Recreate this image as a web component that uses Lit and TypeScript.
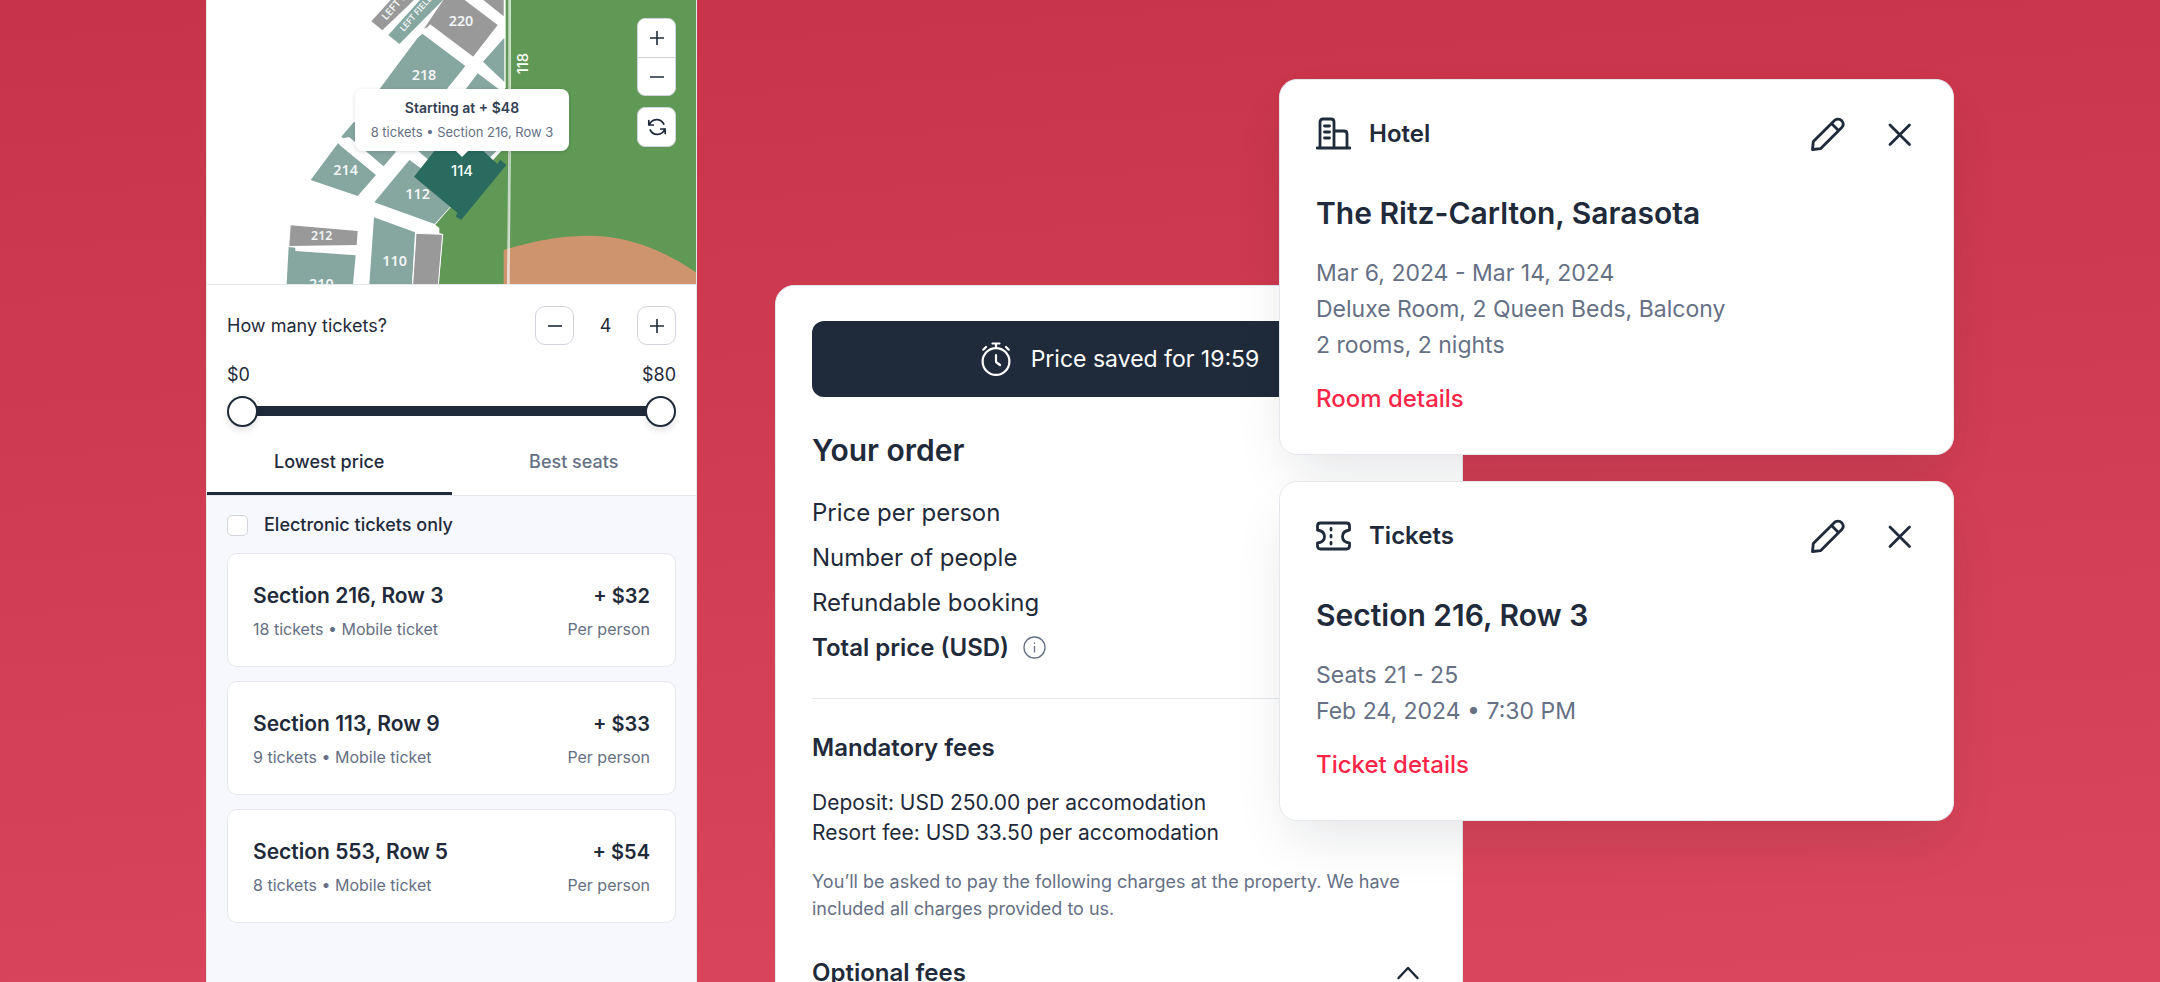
import { LitElement, html, svg, css } from "lit";
import { customElement, property, state } from "lit/decorators.js";
import { classMap } from "lit/directives/class-map.js";

const base = css`
  * {
    box-sizing: border-box;
  }
  :host {
    font-family: Inter, "Open Sans", sans-serif;
    color: #1f2a3a;
  }
  h2,
  h3,
  p,
  ul,
  dl,
  dt {
    margin: 0;
    padding: 0;
  }
  button {
    font: inherit;
    color: inherit;
    background: none;
    border: 0;
    padding: 0;
    cursor: pointer;
  }
  svg {
    display: block;
  }
`;

const plus = svg`<path d="M1 8H15M8 1V15" />`;
const minus = svg`<path d="M1 8H15" />`;

@customElement("stadium-map")
class StadiumMap extends LitElement {
  static styles = [
    base,
    css`
      :host {
        display: block;
        position: relative;
        height: 285px;
        overflow: hidden;
        border-bottom: 1px solid #e4e7ec;
        background: #fff;
      }
      .plan {
        width: 100%;
        height: 100%;
      }
      .teal {
        fill: #86a6a0;
      }
      .gray {
        fill: #999;
      }
      .label {
        font: 600 43px "Noto Sans", sans-serif;
        fill: #f2f5f5;
        text-anchor: middle;
      }
      .label.wide {
        font-size: 37px;
      }
      .label.strip {
        font-size: 31px;
        text-anchor: start;
      }
      .label.strip.small {
        font-size: 26px;
      }
      .label.bright {
        font: 500 44px Inter, sans-serif;
        fill: #fff;
      }
      .tip {
        position: absolute;
        top: 89px;
        left: 148px;
        width: 214px;
        height: 62px;
        padding: 6px 0;
        border-radius: 8px;
        background: #fff;
        box-shadow: 0 1px 4px rgba(16, 24, 40, 0.14);
        text-align: center;
        font-size: 13px;
        line-height: 25px;
        color: #667085;
        white-space: nowrap;
      }
      .tip::after {
        content: "";
        position: absolute;
        top: 100%;
        left: 50%;
        margin-left: -6px;
        border: 6px solid transparent;
        border-top-color: #fff;
        border-bottom: 0;
      }
      .tip strong {
        display: block;
        font-size: 14px;
        font-weight: 600;
        color: #344054;
      }
      .tools {
        position: absolute;
        top: 18px;
        right: 20px;
        display: grid;
        gap: 11px;
      }
      .group {
        width: 39px;
        border: 1px solid #d0d5dd;
        border-radius: 8px;
        background: #fff;
        overflow: hidden;
      }
      .tool {
        display: grid;
        place-items: center;
        width: 100%;
        height: 38px;
      }
      .tool + .tool {
        border-top: 1px solid #d0d5dd;
      }
      .glyph {
        width: 14px;
        height: 14px;
        fill: none;
        stroke: #1f2a3a;
        stroke-width: 1.6;
      }
      .glyph.turn {
        width: 20px;
        height: 20px;
        stroke-width: 1.7;
        stroke-linecap: round;
        stroke-linejoin: round;
      }
    `,
  ];

  render() {
    return html`
      <svg class="plan" viewBox="21 0 1467 852" preserveAspectRatio="xMidYMin slice" aria-label="Seating plan">
        <path fill="#609956" d="M915 0H1491V852H716L729 703L718 700V684L706 674L752 622L915 440Z" />
        <path fill="#cd946d" d="M911 852V750Q1050 707 1165 707Q1330 707 1491 819V852Z" />
        <path stroke="#fff" stroke-opacity=".7" stroke-width="8" d="M929 0V420L925 852" />
        <path stroke="#fff" stroke-width="4" d="M915 0V265" />
        <path class="gray" d="M514 64L572 0H642L547 91Z" />
        <path class="teal" d="M565 105L660 0H729L598 132Z" />
        <path class="gray" d="M730 0H794L893 75L818 172L695 77L672 86Z" />
        <path fill="#fff" d="M667 101L690 73L822 172L838 190L796 197Z" />
        <path class="gray" d="M850 0H911V49Z" />
        <path class="teal" d="M667 101L796 198L740 268H538L652 115Z" />
        <path class="teal" d="M849 185L913 113V246Z" />
        <path class="teal" d="M833 220L897 268H797Z" />
        <path class="teal" d="M462 365L480 380L588 455L551 499L447 411L430 415L424 410Z" />
        <path class="teal" d="M332 540L414 430L425 440L528 525L473 588Z" />
        <path class="teal" d="M640 440H740L683 478Z" />
        <path class="teal" d="M820 440H902L868 475Z" />
        <path class="teal" d="M628 480L662 504L760 610L704 672L523 607Z" />
        <path class="gray" d="M272 676L473 693L470 735L268 738Z" />
        <path class="teal" d="M266 741L286 743V753L467 766L459 852H260Z" />
        <path class="teal" d="M522 652L645 697L636 852H508Z" />
        <path class="gray" stroke="#fff" stroke-width="3" d="M648 700L728 703L715 854H638Z" />
        <path fill="#2a6b60" d="M642 530L725 425H820L892 492L901 479L919 495L784 659L767 650L772 638Z" />
        <text class="label" x="783" y="78">220</text>
        <text class="label" x="672" y="240">218</text>
        <text class="label" x="437" y="526">214</text>
        <text class="label" x="653" y="598">112</text>
        <text class="label" x="584" y="799">110</text>
        <text class="label wide" x="365" y="719">212</text>
        <text class="label" x="364" y="866">210</text>
        <text class="label bright" x="786" y="528">114</text>
        <text class="label bright" transform="translate(983 191) rotate(-90)">118</text>
        <text class="label strip" transform="translate(559 62) rotate(-49)">LEFT R</text>
        <text class="label strip small" transform="translate(611 96) rotate(-49)">LEFT FIELD</text>
      </svg>
      <div class="tools">
        <div class="group">
          <button class="tool" aria-label="Zoom in"><svg class="glyph" viewBox="1 1 14 14">${plus}</svg></button>
          <button class="tool" aria-label="Zoom out"><svg class="glyph" viewBox="1 1 14 14">${minus}</svg></button>
        </div>
        <div class="group">
          <button class="tool" aria-label="Reset map">
            <svg class="glyph turn" viewBox="0 0 20 20">
              <path d="M1.8 3.5V8H6.3M18.2 16.500V12H13.700M2.200 8C5 1 13.500 .8 16.800 7M17.800 12C15 19 6.500 19.200 3.200 13" />
            </svg>
          </button>
        </div>
      </div>
      <div class="tip"><strong>Starting at + $48</strong>8 tickets • Section 216, Row 3</div>
    `;
  }
}

interface Listing {
  seat: string;
  info: string;
  price: string;
}

@customElement("ticket-picker")
class TicketPicker extends LitElement {
  static styles = [
    base,
    css`
      :host {
        display: flex;
        flex-direction: column;
        border: solid #e4e7ec;
        border-width: 0 1px;
        background: #f7f7fe;
        font-size: 18px;
        line-height: 24px;
      }
      .filters {
        padding: 21px 20px 0;
        background: #fff;
      }
      .row {
        display: flex;
        align-items: center;
        justify-content: space-between;
      }
      .stepper {
        display: grid;
        grid-template-columns: 39px 63px 39px;
        align-items: center;
        text-align: center;
      }
      .step {
        display: grid;
        place-items: center;
        height: 39px;
        border: 1px solid #d0d5dd;
        border-radius: 10px;
      }
      .glyph {
        width: 14px;
        height: 14px;
        fill: none;
        stroke: #1f2a3a;
        stroke-width: 1.6;
      }
      .bounds {
        margin-top: 18px;
      }
      .slider {
        display: grid;
        align-items: center;
        height: 32px;
        margin-top: 8px;
        background: linear-gradient(#1f2a3a, #1f2a3a) center / calc(100% - 30px) 10px no-repeat;
      }
      .range {
        grid-area: 1 / 1;
        appearance: none;
        width: 100%;
        height: 31px;
        margin: 0;
        background: none;
        pointer-events: none;
      }
      .range::-webkit-slider-thumb {
        appearance: none;
        width: 31px;
        height: 31px;
        border: 2px solid #1f2a3a;
        border-radius: 50%;
        background: #fff;
        box-shadow: 0 4px 6px rgba(16, 24, 40, 0.1);
        pointer-events: auto;
      }
      .tabs {
        display: grid;
        grid-template-columns: 1fr 1fr;
        margin: 4px -20px 0;
        border-bottom: 1px solid #e4e7ec;
      }
      .tab {
        height: 64px;
        border-bottom: 3px solid transparent;
        font-weight: 500;
        color: #667085;
      }
      .tab.active {
        color: #1f2a3a;
        border-color: #1f2a3a;
      }
      .only {
        display: flex;
        align-items: center;
        gap: 16px;
        margin: 17px 20px 16px;
        font-weight: 500;
      }
      .box {
        appearance: none;
        width: 21px;
        height: 21px;
        margin: 0;
        border: 1px solid #d0d5dd;
        border-radius: 5px;
        background: #fff;
      }
      .box:checked {
        background: #1f2a3a;
      }
      .list {
        display: grid;
        gap: 14px;
        margin: 0 20px;
        list-style: none;
      }
      .offer {
        display: grid;
        grid-template-columns: 1fr auto;
        row-gap: 8px;
        height: 114px;
        padding: 29px 25px 0;
        border: 1px solid #e4e7ec;
        border-radius: 10px;
        background: #fff;
        align-content: start;
      }
      .seat,
      .price {
        font-size: 21px;
        line-height: 26px;
        font-weight: 600;
      }
      .price {
        font-size: 20px;
      }
      .end {
        text-align: right;
      }
      .muted {
        font-size: 16px;
        color: #667085;
      }
    `,
  ];

  @state() count = 4;
  @state() tab = 0;
  @state() low = 0;
  @state() high = 80;

  listings: Listing[] = [
    { seat: "Section 216, Row 3", info: "18 tickets • Mobile ticket", price: "+ $32" },
    { seat: "Section 113, Row 9", info: "9 tickets • Mobile ticket", price: "+ $33" },
    { seat: "Section 553, Row 5", info: "8 tickets • Mobile ticket", price: "+ $54" },
  ];

  render() {
    return html`
      <stadium-map></stadium-map>
      <div class="filters">
        <div class="row">
          <span>How many tickets?</span>
          <div class="stepper">
            <button class="step" aria-label="Fewer tickets" @click=${() => (this.count = Math.max(1, this.count - 1))}>
              <svg class="glyph" viewBox="1 1 14 14">${minus}</svg>
            </button>
            <output>${this.count}</output>
            <button class="step" aria-label="More tickets" @click=${() => this.count++}>
              <svg class="glyph" viewBox="1 1 14 14">${plus}</svg>
            </button>
          </div>
        </div>
        <div class="row bounds"><span>$${this.low}</span><span>$${this.high}</span></div>
        <div class="slider">
          <input class="range" type="range" max="80" aria-label="Lowest price" .value=${String(this.low)}
            @input=${(e: Event) => (this.low = +(e.target as HTMLInputElement).value)} />
          <input class="range" type="range" max="80" aria-label="Highest price" .value=${String(this.high)}
            @input=${(e: Event) => (this.high = +(e.target as HTMLInputElement).value)} />
        </div>
        <div class="tabs" role="tablist">
          ${["Lowest price", "Best seats"].map(
            (name, i) => html`<button role="tab" aria-selected=${i === this.tab}
              class=${classMap({ tab: true, active: i === this.tab })}
              @click=${() => (this.tab = i)}>${name}</button>`
          )}
        </div>
      </div>
      <label class="only"><input class="box" type="checkbox" />Electronic tickets only</label>
      <ul class="list">
        ${this.listings.map(
          (l) => html`<li class="offer">
            <span class="seat">${l.seat}</span><span class="price end">${l.price}</span>
            <span class="muted">${l.info}</span><span class="muted end">Per person</span>
          </li>`
        )}
      </ul>
    `;
  }
}

@customElement("order-summary")
class OrderSummary extends LitElement {
  static styles = [
    base,
    css`
      :host {
        display: block;
        padding: 35px 36px;
        border: 1px solid #e4e7ec;
        border-radius: 19px;
        background: #fff;
        font-size: 24px;
        line-height: 33px;
      }
      .banner {
        display: flex;
        align-items: center;
        justify-content: center;
        gap: 18px;
        height: 76px;
        border-radius: 12px;
        background: #1f2a3a;
        color: #fff;
        font-size: 23px;
      }
      .clock {
        width: 34px;
        height: 36px;
        fill: none;
        stroke: #fff;
        stroke-width: 2.2;
        stroke-linecap: round;
        stroke-linejoin: round;
      }
      .title {
        margin-top: 32px;
        font-size: 30px;
        line-height: 42px;
        font-weight: 600;
      }
      .rows {
        display: grid;
        gap: 12px;
        margin-top: 25px;
      }
      .total {
        display: flex;
        align-items: center;
        gap: 14px;
        font-weight: 600;
      }
      .info {
        width: 23px;
        height: 23px;
        fill: none;
        stroke: #667085;
        stroke-width: 1.3;
      }
      .rule {
        height: 1px;
        margin: 34px 0 32px;
        border: 0;
        background: #e4e7ec;
      }
      .sub {
        font-size: 24px;
        line-height: 33px;
        font-weight: 600;
      }
      .fees {
        margin-top: 24px;
        font-size: 21px;
        line-height: 30px;
      }
      .note {
        margin-top: 20px;
        font-size: 18px;
        line-height: 27px;
        color: #667085;
      }
      .toggle {
        display: flex;
        align-items: center;
        justify-content: space-between;
        width: 100%;
        margin-top: 34px;
        padding-right: 6px;
        font-size: 24px;
        line-height: 33px;
        font-weight: 600;
      }
      .chevron {
        width: 24px;
        height: 14px;
        fill: none;
        stroke: #1f2a3a;
        stroke-width: 2.5;
        stroke-linecap: round;
        stroke-linejoin: round;
      }
    `,
  ];

  render() {
    return html`
      <div class="banner">
        <svg class="clock" viewBox="0 0 34 36" aria-hidden="true">
          <circle cx="17" cy="20.500" r="13.400" />
          <path d="M13.500 2.500H20.500M17 2.500V7M4.200 8.700L7 6M29.800 8.700L27 6M17 14V21L21 24" />
        </svg>
        <span>Price saved for 19:59</span>
      </div>
      <h2 class="title">Your order</h2>
      <dl class="rows">
        <dt>Price per person</dt>
        <dt>Number of people</dt>
        <dt>Refundable booking</dt>
        <dt class="total">
          Total price (USD)
          <svg class="info" viewBox="0 0 23 23" aria-hidden="true">
            <circle cx="11.500" cy="11.500" r="10.500" />
            <path d="M11.500 10V16.500M11.500 6.500V8" />
          </svg>
        </dt>
      </dl>
      <hr class="rule" />
      <h3 class="sub">Mandatory fees</h3>
      <p class="fees">Deposit: USD 250.00 per accomodation<br />Resort fee: USD 33.50 per accomodation</p>
      <p class="note">You’ll be asked to pay the following charges at the property. We have included all charges provided to us.</p>
      <button class="toggle" aria-expanded="true">
        Optional fees
        <svg class="chevron" viewBox="0 0 24 14" aria-hidden="true"><path d="M2.500 12L12 2L21.500 12" /></svg>
      </button>
    `;
  }
}

const hotelIcon = svg`
  <path d="M4 30V5Q4 2 7 2H15Q18 2 18 5V30M18 14H28Q31 14 31 17V30M1 31H34" />
  <path d="M8.500 9H13.500M8.500 15H13.500M8.500 21H13.500" />`;
const ticketIcon = svg`
  <path d="M4.500 4H30.500Q33.500 4 33.500 7V11Q26.500 12 26.500 17.500T33.500 24V27Q33.500 30 30.500 30H4.500Q1.500 30 1.500 27V24Q8.500 23 8.500 17.500T1.500 11V7Q1.500 4 4.500 4Z" />
  <path d="M15 9.500V11M15 16.500V18M15 23.500V25" />`;

@customElement("booking-card")
class BookingCard extends LitElement {
  static styles = [
    base,
    css`
      :host {
        display: block;
        padding: 33px 36px 37px;
        border: 1px solid #e4e7ec;
        border-radius: 18px;
        background: #fff;
        box-shadow: 0 24px 56px -12px rgba(16, 24, 40, 0.12);
        font-size: 23px;
        line-height: 36px;
      }
      .head {
        display: flex;
        align-items: center;
        height: 42px;
        font-size: 24px;
        font-weight: 600;
      }
      .kind {
        margin-right: 18px;
      }
      .name {
        flex: 1;
      }
      .icon {
        width: 35px;
        height: 35px;
        fill: none;
        stroke: #1f2a3a;
        stroke-width: 2.8;
        stroke-linecap: round;
        stroke-linejoin: round;
      }
      .act {
        margin-left: 37px;
      }
      .title {
        margin-top: 37px;
        font-size: 30px;
        line-height: 42px;
        font-weight: 600;
      }
      .lines {
        margin: 21px 0 18px;
        color: #667085;
      }
      .more {
        display: block;
        width: max-content;
        color: #fd2648;
        font-size: 24px;
        font-weight: 500;
        text-decoration: none;
      }
    `,
  ];

  @property() kind = "hotel";
  @property() name = "";
  @property() heading = "";
  @property({ attribute: false }) lines: string[] = [];
  @property() link = "";

  render() {
    return html`
      <div class="head">
        <svg class="icon kind" viewBox="0 0 35 35" aria-hidden="true">
          ${this.kind === "hotel" ? hotelIcon : ticketIcon}
        </svg>
        <span class="name">${this.name}</span>
        <button class="act" aria-label="Edit">
          <svg class="icon" viewBox="0 0 35 35">
            <path d="M2.500 32.500L3.300 24.500L25 2.900Q29 .800 32 4Q34.500 7.200 32 10.200L10.500 31.700ZM21.500 6.500L28.500 13.500" />
          </svg>
        </button>
        <button class="act" aria-label="Remove">
          <svg class="icon" viewBox="0 0 35 35"><path d="M8 8L27.500 27.500M27.500 8L8 27.500" /></svg>
        </button>
      </div>
      <h2 class="title">${this.heading}</h2>
      <div class="lines">${this.lines.map((l) => html`<p>${l}</p>`)}</div>
      <a class="more" href="#">${this.link}</a>
    `;
  }
}

@customElement("app-root")
class AppRoot extends LitElement {
  static styles = [
    base,
    css`
      :host {
        display: grid;
        grid-template-columns:
          minmax(0, 206fr) minmax(0, 491fr) minmax(0, 78fr) minmax(0, 504fr)
          minmax(0, 184fr) minmax(0, 491fr) minmax(0, 206fr);
        grid-template-rows: 100vh;
        height: 100vh;
        overflow: hidden;
        background: linear-gradient(176deg, #c73348, #da475c);
      }
      .picker {
        grid-area: 1 / 2;
      }
      .order {
        grid-area: 1 / 4 / auto / span 2;
        margin-top: 285px;
        height: max-content;
      }
      .cards {
        grid-area: 1 / 5 / auto / span 2;
        display: grid;
        align-content: start;
        gap: 26px;
        padding-top: 79px;
      }
    `,
  ];

  render() {
    return html`
      <ticket-picker class="picker"></ticket-picker>
      <order-summary class="order"></order-summary>
      <div class="cards">
        <booking-card
          kind="hotel"
          name="Hotel"
          heading="The Ritz-Carlton, Sarasota"
          link="Room details"
          .lines=${["Mar 6, 2024 - Mar 14, 2024", "Deluxe Room, 2 Queen Beds, Balcony", "2 rooms, 2 nights"]}
        ></booking-card>
        <booking-card
          kind="ticket"
          name="Tickets"
          heading="Section 216, Row 3"
          link="Ticket details"
          .lines=${["Seats 21 - 25", "Feb 24, 2024 • 7:30 PM"]}
        ></booking-card>
      </div>
    `;
  }
}
